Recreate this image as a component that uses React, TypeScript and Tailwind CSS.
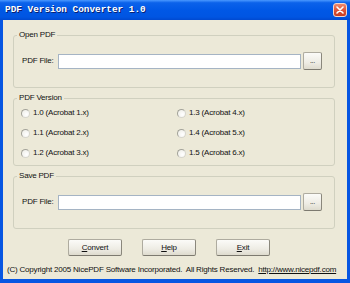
import React from 'react'

const btn =
  'flex items-center justify-center h-[17px] w-[54px] rounded-[2px] border border-[#aeab9f] border-b-[#7d7a70] border-r-[#8a877c] bg-[linear-gradient(to_bottom,#fbfbf8,#eeece4_60%,#dedbce)]'

function FileRow() {
  return (
    <div className="flex items-center h-[18px]">
      <span className="w-[36px] shrink-0 leading-[10px]">PDF File:</span>
      <div className="flex-1 h-[15px] border border-[#a5b4c4] bg-white" />
      <div className="ml-[2px] w-[19px] h-[18px] flex items-center justify-center rounded-[2px] border border-[#aeab9f] border-b-[#7d7a70] border-r-[#8a877c] bg-[linear-gradient(to_bottom,#fbfbf8,#eeece4_60%,#dedbce)] text-[7px] leading-none pb-[2px]">
        ...
      </div>
    </div>
  )
}

function Radio({ label }: { label: string }) {
  return (
    <div className="flex items-center h-[20px] gap-[3px]">
      <span className="w-[9px] h-[9px] rounded-full border border-[#a3a39a] border-r-[#d6d5cc] border-b-[#d6d5cc] bg-[radial-gradient(circle_at_65%_65%,#ffffff,#ecebe4)]" />
      <span className="leading-[10px]">{label}</span>
    </div>
  )
}

export default function App() {
  const versions = [
    ['1.0 (Acrobat 1.x)', '1.3 (Acrobat 4.x)'],
    ['1.1 (Acrobat 2.x)', '1.4 (Acrobat 5.x)'],
    ['1.2 (Acrobat 3.x)', '1.5 (Acrobat 6.x)'],
  ]

  return (
    <div className="w-[350px] h-[283px] flex flex-col bg-[#0756e2] font-['Liberation_Sans',Arial,sans-serif] text-[8px] tracking-[-0.2px] text-[#111]">
      {/* title bar */}
      <div className="h-[20px] shrink-0 flex items-center justify-between pl-[5px] pr-[3px] bg-[linear-gradient(to_bottom,#4a98ff_0%,#0b62ea_14%,#0058e6_50%,#0055e2_85%,#0049d0_100%)]">
        <span className="font-['Liberation_Mono','DejaVu_Sans_Mono',monospace] font-bold text-[9.4px] tracking-normal text-white [text-shadow:1px_1px_0_#0a1f6e] leading-none">
          PDF Version Converter 1.0
        </span>
        <div className="w-[14px] h-[14px] rounded-[3px] border border-[#f4d6cc] bg-[linear-gradient(to_bottom,#ef8a6e,#e0553a_50%,#c83c20)] flex items-center justify-center">
          <svg width="8" height="8" viewBox="0 0 8 8">
            <path d="M1 1L7 7M7 1L1 7" stroke="white" strokeWidth="1.6" strokeLinecap="round" />
          </svg>
        </div>
      </div>

      {/* client area */}
      <div className="flex-1 mx-[3px] mb-[4px] bg-[#ece9d8] flex flex-col pt-[10px] pl-[10px] pr-[12px]">
        <fieldset className="min-w-0 border border-[#d0d0bf] rounded-[3px] pl-[8px] pr-[12px] pt-[12px] pb-[17px]">
          <legend className="-ml-[5px] px-[2px] leading-[10px]">Open PDF</legend>
          <FileRow />
        </fieldset>

        <fieldset className="min-w-0 mt-[5px] border border-[#d0d0bf] rounded-[3px] pl-[7px] pr-[8px] pt-0 pb-[2px]">
          <legend className="-ml-[4px] px-[2px] leading-[10px]">PDF Version</legend>
          <div className="grid grid-cols-[156px_1fr]">
            {versions.map(([a, b]) => (
              <React.Fragment key={a}>
                <Radio label={a} />
                <Radio label={b} />
              </React.Fragment>
            ))}
          </div>
        </fieldset>

        <fieldset className="min-w-0 mt-[5px] border border-[#d0d0bf] rounded-[3px] pl-[8px] pr-[12px] pt-[12px] pb-[17px]">
          <legend className="-ml-[5px] px-[2px] leading-[10px]">Save PDF</legend>
          <FileRow />
        </fieldset>

        {/* buttons */}
        <div className="flex gap-[20px] mt-[10px] ml-[55px]">
          <div className={btn}>
            <span><span className="underline">C</span>onvert</span>
          </div>
          <div className={btn}>
            <span><span className="underline">H</span>elp</span>
          </div>
          <div className={btn}>
            <span><span className="underline">E</span>xit</span>
          </div>
        </div>

        {/* footer */}
        <div className="mt-[9px] -ml-[6px] leading-[10px] whitespace-pre">
          {'(C) Copyright 2005 NicePDF Software Incorporated.  All Rights Reserved.  '}
          <span className="underline">http://www.nicepdf.com</span>
        </div>
      </div>
    </div>
  )
}
